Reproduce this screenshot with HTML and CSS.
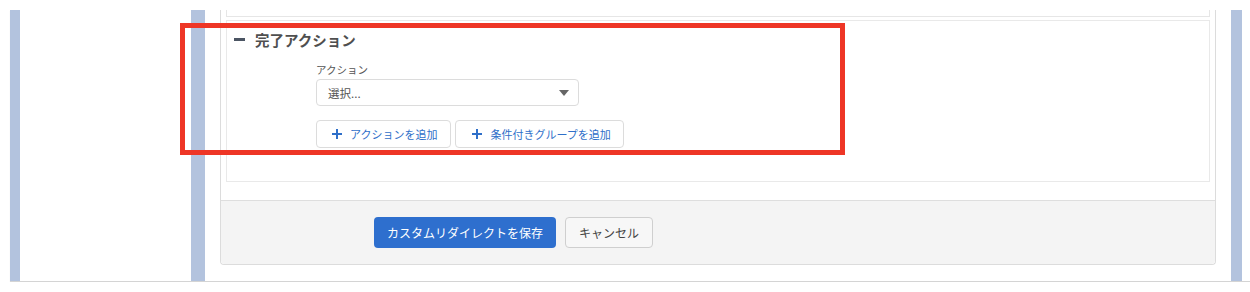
FILE: index.html
```html
<!DOCTYPE html>
<html lang="ja">
<head>
    <meta charset="utf-8">
    <title>完了アクション</title>
    <link rel="stylesheet" href="styles.css">
</head>
<body>
    <div class="viewport">
        <div class="frame">
            <div class="rail rail-outer"></div>
            <div class="gutter"></div>
            <div class="rail rail-inner"></div>
            <div class="main">
                <div class="card">
                    <div class="section-prev"></div>
                    <div class="section">
                        <div class="section-head">
                            <span class="collapse-icon"></span>
                            <span class="section-title">完了アクション</span>
                        </div>
                        <div class="form-block">
                            <div class="field-label">アクション</div>
                            <div class="select">
                                <span class="select-text">選択...</span>
                                <span class="caret"></span>
                            </div>
                            <div class="btn-row">
                                <button class="btn-add"><span class="plus"></span>アクションを追加</button>
                                <button class="btn-add"><span class="plus"></span>条件付きグループを追加</button>
                            </div>
                        </div>
                    </div>
                    <div class="footer">
                        <button class="btn-primary">カスタムリダイレクトを保存</button>
                        <button class="btn-default">キャンセル</button>
                    </div>
                </div>
            </div>
            <div class="rail rail-right"></div>
        </div>
    </div>
    <!-- annotation -->
    <div class="highlight"></div>
</body>
</html>
```

FILE: styles.css
```css
body {
    margin: 0;
    padding: 0;
    background: #fff;
    font-family: "Noto Sans CJK JP", "Noto Sans", sans-serif;
    color: #444;
}

.viewport {
    padding: 10px 0 0 10px;
}

.frame {
    display: flex;
    height: 271px;
    border-bottom: 1px solid #d4d4d4;
    box-shadow: 0 1px 1px #ececec;
}

.rail {
    background-color: #b3c3de;
}

.rail-outer {
    width: 10px;
}

.gutter {
    width: 171px;
}

.rail-inner {
    width: 14px;
}

.rail-right {
    width: 11px;
}

.main {
    width: 996px;
    padding: 0 15px;
}

.card {
    border: 1px solid #dcdcdc;
    border-top: none;
    border-radius: 0 0 4px 4px;
    height: 254px;
    display: flex;
    flex-direction: column;
}

.section-prev {
    height: 6px;
    margin: 0 5px;
    border: 1px solid #e6e6e6;
    border-top: none;
}

.section {
    margin: 3px 5px 0 5px;
    border: 1px solid #e9e9e9;
    padding-top: 8px;
    box-sizing: border-box;
    height: 162px;
}

.section-head {
    display: flex;
    align-items: center;
    padding-left: 7px;
    height: 20px;
}

.collapse-icon {
    width: 11px;
    height: 3px;
    background: #4b5563;
    margin-right: 10px;
}

.section-title {
    font-size: 14.5px;
    font-weight: bold;
    color: #4f4f4f;
}

.form-block {
    padding-left: 89px;
    padding-top: 14px;
}

.field-label {
    font-size: 10.5px;
    color: #555;
    line-height: 14px;
    height: 16px;
}

.select {
    width: 263px;
    height: 27px;
    box-sizing: border-box;
    border: 1px solid #dcdcdc;
    border-radius: 4px;
    display: flex;
    align-items: center;
    justify-content: space-between;
    padding: 0 9px 0 11px;
}

.select-text {
    font-size: 11.5px;
    color: #555;
}

.caret {
    width: 0;
    height: 0;
    border-left: 5px solid transparent;
    border-right: 5px solid transparent;
    border-top: 6px solid #666;
}

.btn-row {
    display: flex;
    gap: 4px;
    margin-top: 14px;
}

.btn-add {
    height: 28px;
    box-sizing: border-box;
    border: 1px solid #dcdcdc;
    border-radius: 4px;
    background: #fff;
    color: #2f6fc9;
    font-family: inherit;
    font-size: 11px;
    white-space: nowrap;
    display: flex;
    align-items: center;
    padding: 0 13px 0 15px;
}

.btn-add:last-child {
    padding: 0 12px 0 16px;
}

.plus {
    position: relative;
    width: 10px;
    height: 10px;
    margin-right: 8px;
}

.plus::before,
.plus::after {
    content: "";
    position: absolute;
    background: #2f6fc9;
}

.plus::before {
    left: 0;
    top: 4px;
    width: 10px;
    height: 2px;
}

.plus::after {
    left: 4px;
    top: 0;
    width: 2px;
    height: 10px;
}

.footer {
    margin-top: 18px;
    flex: 1;
    border-top: 1px solid #dedede;
    background: #f4f4f4;
    border-radius: 0 0 4px 4px;
    display: flex;
    align-items: flex-start;
    gap: 9px;
    padding: 16px 0 0 153px;
}

.btn-primary {
    width: 182px;
    height: 31px;
    border: none;
    border-radius: 4px;
    background: #2e6fce;
    color: #fff;
    font-family: inherit;
    font-size: 12px;
}

.btn-default {
    width: 88px;
    height: 31px;
    border: 1px solid #cfcfcf;
    border-radius: 4px;
    background: #f7f7f7;
    color: #444;
    font-family: inherit;
    font-size: 12px;
}

.highlight {
    position: absolute;
    left: 180px;
    top: 23px;
    width: 655px;
    height: 122px;
    border: 5px solid #ee3626;
}
```
